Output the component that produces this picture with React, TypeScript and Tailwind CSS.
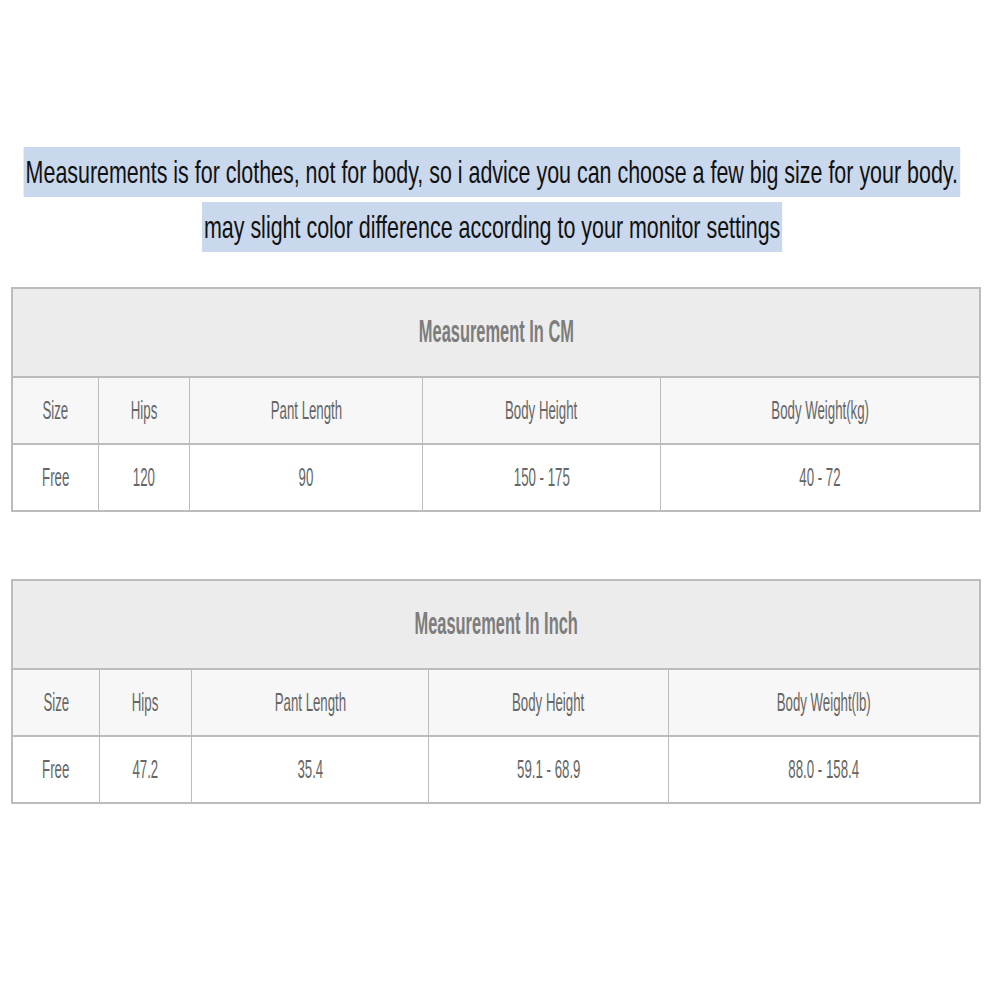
import React from "react";

interface SizeTable {
  title: string;
  headers: string[];
  values: string[];
  widths: string[];
}

const TABLES: SizeTable[] = [
  {
    title: "Measurement In CM",
    headers: ["Size", "Hips", "Pant Length", "Body Height", "Body Weight(kg)"],
    values: ["Free", "120", "90", "150 - 175", "40 - 72"],
    widths: ["w-[85px]", "w-[91px]", "w-[233px]", "w-[238px]", "flex-1"],
  },
  {
    title: "Measurement In Inch",
    headers: ["Size", "Hips", "Pant Length", "Body Height", "Body Weight(lb)"],
    values: ["Free", "47.2", "35.4", "59.1 - 68.9", "88.0 - 158.4"],
    widths: ["w-[86px]", "w-[92px]", "w-[237px]", "w-[240px]", "flex-1"],
  },
];

function Squeezed({ children, className = "" }: { children: React.ReactNode; className?: string }) {
  // the source picture is squashed sideways, so the text is narrowed to match
  return <span className={`inline-block whitespace-nowrap ${className}`}>{children}</span>;
}

function Row({ cells, widths, bg }: { cells: string[]; widths: string[]; bg: string }) {
  return (
    <div className={`flex h-[67px] border-t-2 border-[#bcbcbc] ${bg}`}>
      {cells.map((c, i) => (
        <div
          key={i}
          className={`flex items-center justify-center ${widths[i]} ${i > 0 ? "border-l border-[#bcbcbc]" : ""}`}
        >
          <Squeezed className="scale-x-[0.53] text-[25px] text-[#666666]">{c}</Squeezed>
        </div>
      ))}
    </div>
  );
}

function Table({ t }: { t: SizeTable }) {
  return (
    <div className="ml-[11px] w-[970px] border-2 border-[#bcbcbc]">
      <div className="flex h-[87px] items-center justify-center bg-[#ececec]">
        <Squeezed className="scale-x-[0.53] text-[31px] font-bold text-[#7d7d7d]">{t.title}</Squeezed>
      </div>
      <Row cells={t.headers} widths={t.widths} bg="bg-[#f7f7f7]" />
      <Row cells={t.values} widths={t.widths} bg="bg-white" />
    </div>
  );
}

export default function App() {
  return (
    <div className="h-[1000px] w-[1000px] overflow-hidden bg-white font-['Liberation_Sans',Arial,sans-serif]">
      <div className="flex flex-col items-center pt-[147px] pr-[16px] text-[32px] leading-[50px] text-[#111111]">
        <div className="flex w-full justify-center">
          <Squeezed className="scale-x-[0.67] bg-[#c9d8ec] px-[3px]">
            Measurements is for clothes, not for body, so i advice you can choose a few big size for your body.
          </Squeezed>
        </div>
        <div className="mt-[5px] flex w-full justify-center">
          <Squeezed className="scale-x-[0.67] bg-[#c9d8ec] px-[3px]">
            may slight color difference according to your monitor settings
          </Squeezed>
        </div>
      </div>

      <div className="mt-[35px]">
        <Table t={TABLES[0]} />
      </div>
      <div className="mt-[67px]">
        <Table t={TABLES[1]} />
      </div>
    </div>
  );
}
